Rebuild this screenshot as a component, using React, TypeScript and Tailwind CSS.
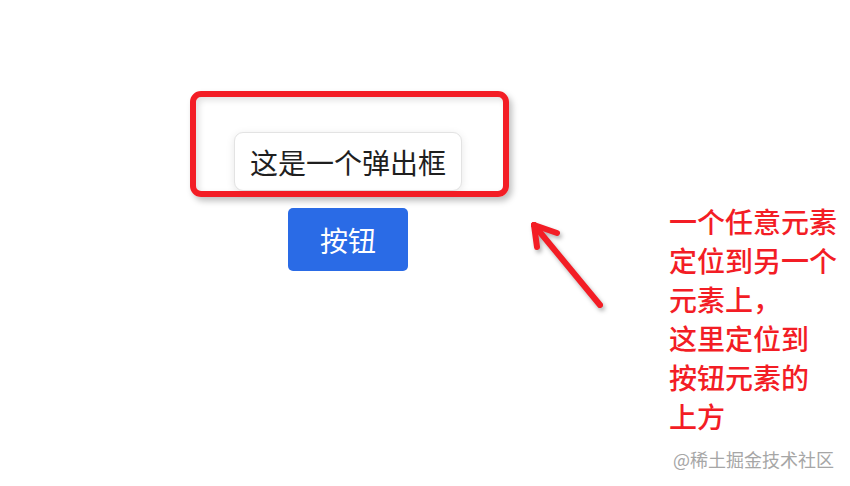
const CJK = "font-['Noto_Sans_CJK_SC','Noto_Sans',sans-serif]";

function Arrow() {
  return (
    <svg
      width="90"
      height="100"
      viewBox="0 0 90 100"
      fill="none"
      aria-hidden
      className="drop-shadow-[2px_3px_2px_rgba(0,0,0,0.3)]"
    >
      <g stroke="#f31d25" strokeWidth="6" strokeLinecap="round" strokeLinejoin="round">
        <path d="M78 92 L12 12" />
        <path d="M12 12 L35 20" />
        <path d="M12 12 L15 34" />
      </g>
    </svg>
  );
}

export default function App() {
  return (
    <div className={`relative flex h-[486px] w-[850px] overflow-hidden bg-white ${CJK}`}>
      {/* demo: popup placed above the button */}
      <div className="flex w-[669px] shrink-0 flex-col items-center gap-[17px] pt-[132px] pl-[27px]">
        <div className="relative">
          <div className="flex h-[59px] w-[228px] items-center justify-center rounded-[9px] border border-[#e3e3e3] bg-white text-[28px] leading-none text-[#1f1f1f] shadow-[0_2px_8px_rgba(0,0,0,0.1)]">
            这是一个弹出框
          </div>
          {/* highlight frame around the popup */}
          <div className="pointer-events-none absolute -top-[41px] -right-[47px] -bottom-[6px] -left-[44px] rounded-[11px] border-[6px] border-[#f31d25] shadow-[3px_4px_6px_rgba(0,0,0,0.25),inset_3px_3px_6px_rgba(0,0,0,0.12)]" />
        </div>
        <div className="relative">
          <button className="flex h-[63px] w-[120px] items-center justify-center rounded-[5px] bg-[#2a6be6] text-[28px] leading-none text-white">
            按钮
          </button>
          <div className="pointer-events-none absolute top-[5px] left-[234px]">
            <Arrow />
          </div>
        </div>
      </div>

      {/* annotation note */}
      <div className="flex flex-col pt-[202px]">
        <p className="text-[28px] font-medium leading-[39px] text-[#f31d25]">
          一个任意元素
          <br />
          定位到另一个
          <br />
          元素上，
          <br />
          这里定位到
          <br />
          按钮元素的
          <br />
          上方
        </p>
        <p className="mt-[11px] pl-[4px] text-[18px] leading-[24px] text-[#a6a6a6]">
          @稀土掘金技术社区
        </p>
      </div>
    </div>
  );
}
